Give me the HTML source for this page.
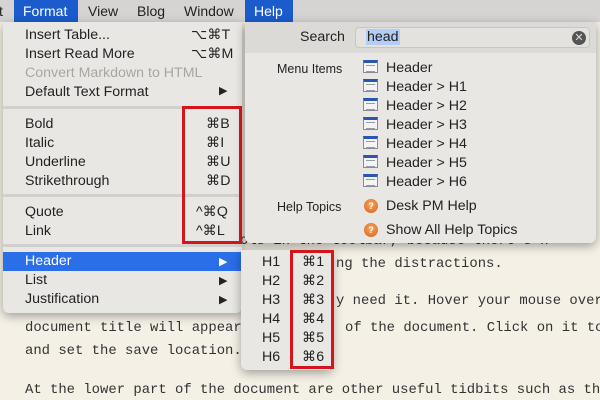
<!DOCTYPE html>
<html><head><meta charset="utf-8"><style>
*{margin:0;padding:0;box-sizing:border-box}
body{width:600px;height:400px;overflow:hidden;background:#f4f0e6;position:relative;font-family:"Liberation Sans",sans-serif;color:#222}
.mono{position:absolute;font-family:"Liberation Mono",monospace;font-size:13.9px;color:#333;white-space:nowrap}
.bar{position:absolute;left:0;top:0;width:600px;height:22px;background:#d6d4d2;font-size:14px}
.bar span{position:absolute;top:3px}
.hl{position:absolute;top:0;height:22px;background:#1b5bcc}
.menu{position:absolute;background:#e9e7e4;border-radius:0 0 6px 6px;box-shadow:0 3px 10px rgba(0,0,0,.35);font-size:14.2px}
.it{position:absolute;white-space:nowrap;margin-top:1px}
.sep{position:absolute;left:0;right:0;height:3px;background:#d2d0cd}
.red{position:absolute;border:3px solid #d4161c}
.ic{position:absolute;width:15px;height:13px;background:#f4f4f4;border:1px solid #8a8a9a;border-top:3px solid #2b55b0;margin-top:1px}
.ic:after{content:"";position:absolute;left:2px;right:2px;top:2px;height:5px;border-top:1px solid #99a;border-bottom:1px solid #99a}
.q{position:absolute;width:14px;height:14px;border-radius:50%;background:radial-gradient(circle at 50% 40%,#f6a85a,#d9601a);color:#fff;font-size:9px;text-align:center;line-height:14px;font-weight:bold;margin-top:1px}
</style></head><body>
<div class="mono" style="left:240px;top:233px">ols in the toolbar, because there's n</div>
<div class="mono" style="left:580px;top:210px">e.</div>
<div class="mono" style="left:336px;top:256px">ng the distractions.</div>
<div class="mono" style="left:336px;top:293px">y need it. Hover your mouse over</div>
<div class="mono" style="left:25px;top:320px">document title will appear</div>
<div class="mono" style="left:345px;top:320px">of the document. Click on it to</div>
<div class="mono" style="left:25px;top:343px">and set the save location.</div>
<div class="mono" style="left:25px;top:382px">At the lower part of the document are other useful tidbits such as th</div>

<div class="bar">
<div class="hl" style="left:14px;width:64px"></div>
<div class="hl" style="left:245px;width:48px"></div>
<span style="left:-1px">t</span>
<span style="left:23px;color:#fff">Format</span>
<span style="left:88px">View</span>
<span style="left:137px">Blog</span>
<span style="left:184px">Window</span>
<span style="left:254px;color:#fff">Help</span>
</div>

<div class="menu" style="left:3px;top:22px;width:239px;height:291px">
<div class="it" style="left:22px;top:4px">Insert Table...</div><div class="it" style="left:188px;top:4px">⌥⌘T</div>
<div class="it" style="left:22px;top:23px">Insert Read More</div><div class="it" style="left:188px;top:23px">⌥⌘M</div>
<div class="it" style="left:22px;top:42px;color:#a8a6a4">Convert Markdown to HTML</div>
<div class="it" style="left:22px;top:61px">Default Text Format</div><div class="it" style="left:216px;top:61px;font-size:11px">▶</div>
<div class="sep" style="top:84px"></div>
<div class="it" style="left:22px;top:93px">Bold</div><div class="it" style="left:203px;top:93px">⌘B</div>
<div class="it" style="left:22px;top:112px">Italic</div><div class="it" style="left:203px;top:112px">⌘I</div>
<div class="it" style="left:22px;top:131px">Underline</div><div class="it" style="left:203px;top:131px">⌘U</div>
<div class="it" style="left:22px;top:150px">Strikethrough</div><div class="it" style="left:203px;top:150px">⌘D</div>
<div class="sep" style="top:172px"></div>
<div class="it" style="left:22px;top:181px">Quote</div><div class="it" style="left:193px;top:181px">^⌘Q</div>
<div class="it" style="left:22px;top:200px">Link</div><div class="it" style="left:193px;top:200px">^⌘L</div>
<div class="sep" style="top:222px"></div>
<div style="position:absolute;left:0;right:0;top:230px;height:19px;background:#2a6ee8"></div>
<div class="it" style="left:22px;top:230px;color:#fff">Header</div><div class="it" style="left:216px;top:232px;font-size:11px;color:#fff">▶</div>
<div class="it" style="left:22px;top:249px">List</div><div class="it" style="left:216px;top:251px;font-size:11px">▶</div>
<div class="it" style="left:22px;top:268px">Justification</div><div class="it" style="left:216px;top:270px;font-size:11px">▶</div>
</div>
<div class="red" style="left:182px;top:106px;width:60px;height:138px"></div>

<div class="menu" style="left:245px;top:22px;width:351px;height:221px">
<div style="position:absolute;left:0;right:0;top:0;height:31px;background:#dcdad7"></div>
<div class="it" style="left:55px;top:6px">Search</div>
<div style="position:absolute;left:110px;top:5px;width:235px;height:21px;background:#e4e2df;border:1px solid #c8c6c3;border-radius:4px"></div>
<div class="it" style="left:121px;top:6px;background:#b3cdf6;padding:0 1px">head</div>
<div style="position:absolute;left:327px;top:9px;width:14px;height:14px;border-radius:50%;background:#555;color:#ddd;font-size:11px;line-height:14px;text-align:center">✕</div>
<div class="it" style="left:32px;top:39px;font-size:12.5px">Menu Items</div>
<div class="it" style="left:32px;top:177px;font-size:12.5px">Help Topics</div>
<div class="ic" style="left:118px;top:37px"></div><div class="it" style="left:141px;top:37px">Header</div>
<div class="ic" style="left:118px;top:56px"></div><div class="it" style="left:141px;top:56px">Header &gt; H1</div>
<div class="ic" style="left:118px;top:75px"></div><div class="it" style="left:141px;top:75px">Header &gt; H2</div>
<div class="ic" style="left:118px;top:94px"></div><div class="it" style="left:141px;top:94px">Header &gt; H3</div>
<div class="ic" style="left:118px;top:113px"></div><div class="it" style="left:141px;top:113px">Header &gt; H4</div>
<div class="ic" style="left:118px;top:132px"></div><div class="it" style="left:141px;top:132px">Header &gt; H5</div>
<div class="ic" style="left:118px;top:151px"></div><div class="it" style="left:141px;top:151px">Header &gt; H6</div>
<div class="q" style="left:119px;top:176px">?</div><div class="it" style="left:141px;top:175px">Desk PM Help</div>
<div class="q" style="left:119px;top:200px">?</div><div class="it" style="left:141px;top:199px">Show All Help Topics</div>
</div>

<div class="menu" style="left:241px;top:250px;width:92px;height:120px;border-radius:0 0 6px 6px">
<div class="it" style="left:21px;top:3px">H1</div><div class="it" style="left:61px;top:3px">⌘1</div>
<div class="it" style="left:21px;top:22px">H2</div><div class="it" style="left:61px;top:22px">⌘2</div>
<div class="it" style="left:21px;top:41px">H3</div><div class="it" style="left:61px;top:41px">⌘3</div>
<div class="it" style="left:21px;top:60px">H4</div><div class="it" style="left:61px;top:60px">⌘4</div>
<div class="it" style="left:21px;top:79px">H5</div><div class="it" style="left:61px;top:79px">⌘5</div>
<div class="it" style="left:21px;top:98px">H6</div><div class="it" style="left:61px;top:98px">⌘6</div>
</div>
<div class="red" style="left:290px;top:250px;width:44px;height:119px"></div>
</body></html>
